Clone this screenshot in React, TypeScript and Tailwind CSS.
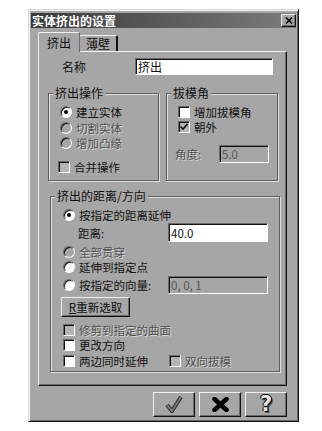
import type { ReactNode } from "react";

const FONT = "font-['SimSun','Noto_Sans_CJK_SC',sans-serif]";

type ItemProps = {
  children: ReactNode;
  checked?: boolean;
  disabled?: boolean;
  grayBox?: boolean;
};

// sunken round button, win95 style
const Radio = ({ checked, disabled }: { checked?: boolean; disabled?: boolean }) => (
  <span
    className={`flex h-[12px] w-[12px] shrink-0 items-center justify-center rounded-full border border-t-[#6a6a6a] border-l-[#6a6a6a] border-r-white border-b-white shadow-[inset_1px_1px_0_#111] ${
      disabled ? "bg-[#a6a6a6]" : "bg-white"
    }`}
  >
    {checked && <span className="h-[4px] w-[4px] rounded-full bg-black" />}
  </span>
);

const Box = ({ checked, disabled }: { checked?: boolean; disabled?: boolean }) => (
  <span
    className={`flex h-[12px] w-[12px] shrink-0 items-center justify-center border border-t-[#6a6a6a] border-l-[#6a6a6a] border-r-white border-b-white shadow-[inset_1px_1px_0_#111] ${
      disabled ? "bg-[#b4b4b4]" : "bg-white"
    }`}
  >
    {checked && (
      <svg width="8" height="8" viewBox="0 0 8 8">
        <path d="M0.5 3.5 L3 6 L7.5 1" stroke="#111" strokeWidth="1.6" fill="none" />
      </svg>
    )}
  </span>
);

const Text = ({ children, disabled }: { children: ReactNode; disabled?: boolean }) => (
  <span
    className={
      disabled
        ? "whitespace-nowrap text-[#505050] [text-shadow:1px_1px_0_#d6d6d6]"
        : "whitespace-nowrap text-[#111]"
    }
  >
    {children}
  </span>
);

const RadioItem = ({ children, checked, disabled }: ItemProps) => (
  <div className="flex items-center gap-[4px]">
    <Radio checked={checked} disabled={disabled} />
    <Text disabled={disabled}>{children}</Text>
  </div>
);

const CheckItem = ({ children, checked, disabled, grayBox }: ItemProps) => (
  <div className="flex items-center gap-[4px]">
    <Box checked={checked} disabled={disabled || grayBox} />
    <Text disabled={disabled}>{children}</Text>
  </div>
);

const Field = ({ value, disabled, className }: { value: string; disabled?: boolean; className: string }) => (
  <div
    className={`flex items-center border border-t-[#6a6a6a] border-l-[#6a6a6a] border-r-white border-b-white pl-[2px] shadow-[inset_1px_1px_0_#111] ${
      disabled ? "bg-[#a6a6a6] text-[#555]" : "bg-white text-[#111]"
    } ${className}`}
  >
    {value}
  </div>
);

const Group = ({ title, className, children }: { title: string; className: string; children: ReactNode }) => (
  <div
    className={`relative border border-[#5e5e5e] shadow-[1px_1px_0_#e0e0e0,inset_1px_1px_0_#e0e0e0] ${className}`}
  >
    <span className="absolute -top-[8px] left-[4px] bg-[#a6a6a6] px-[2px] leading-[14px] text-[12px] text-[#111]">
      {title}
    </span>
    {children}
  </div>
);

const RaisedButton = ({ children, className }: { children: ReactNode; className: string }) => (
  <div
    className={`flex items-center justify-center border border-t-[#f0f0f0] border-l-[#f0f0f0] border-r-[#111] border-b-[#111] bg-[#a6a6a6] shadow-[inset_-1px_-1px_0_#6a6a6a] ${className}`}
  >
    {children}
  </div>
);

export default function App() {
  return (
    <div className={`h-[431px] w-[322px] bg-white pl-[28px] pt-[9px] text-[11.5px] leading-[14px] ${FONT}`}>
      {/* DIALOG */}
      <div className="h-[413px] w-[271px] border border-t-[#d8d8d8] border-l-[#d8d8d8] border-r-[#111] border-b-[#111] bg-[#a6a6a6] px-[2px] pt-[3px] shadow-[inset_1px_1px_0_#f4f4f4,inset_-1px_-1px_0_#6a6a6a]">
        {/* TITLE BAR */}
        <div className="flex h-[15px] items-center justify-between bg-gradient-to-r from-[#3a3a3a] to-[#7c7c7c] pl-[1px]">
          <span className="text-[12px] font-bold leading-[15px] text-white">实体挤出的设置</span>
          <RaisedButton className="h-[13px] w-[15px]">
            <svg width="8" height="7" viewBox="0 0 8 7">
              <path d="M1 0.5 L7 6.5 M7 0.5 L1 6.5" stroke="#000" strokeWidth="1.6" />
            </svg>
          </RaisedButton>
        </div>

        {/* TABS */}
        <div className="ml-[7px] mt-[4px] flex h-[19px] items-end">
          <div className="relative z-10 -mb-[1px] flex h-[20px] w-[42px] items-center justify-center rounded-tl-[2px] border-l border-t border-r border-l-[#f0f0f0] border-t-[#f0f0f0] border-r-[#6a6a6a] bg-[#a6a6a6] text-[12px] text-[#111]">
            挤出
          </div>
          <div className="flex h-[16px] w-[38px] items-center justify-center rounded-tr-[2px] border-t border-r-2 border-t-[#f0f0f0] border-r-[#111] text-[12px] text-[#111]">
            薄壁
          </div>
        </div>

        {/* PANEL */}
        <div className="ml-[7px] h-[335px] w-[249px] border border-t-[#f0f0f0] border-l-[#f0f0f0] border-r-[#111] border-b-[#111] shadow-[inset_-1px_-1px_0_#6a6a6a]">
          {/* NAME */}
          <div className="mt-[6px] flex h-[17px] items-center">
            <div className="w-[96px] pl-[23px] text-[12px] text-[#111]">名称</div>
            <Field value="挤出" className="h-[17px] w-[138px] text-[12px]" />
          </div>

          <div className="mt-[18px] flex">
            {/* 挤出操作 */}
            <Group title="挤出操作" className="ml-[9px] h-[88px] w-[111px]">
              <div className="pl-[11px] pt-[10px]">
                <div className="flex h-[16px] items-center">
                  <RadioItem checked>建立实体</RadioItem>
                </div>
                <div className="flex h-[16px] items-center">
                  <RadioItem disabled>切割实体</RadioItem>
                </div>
                <div className="flex h-[14px] items-center">
                  <RadioItem disabled>增加凸缘</RadioItem>
                </div>
              </div>
              <div className="mt-[10px] flex h-[14px] items-center pl-[9px]">
                <CheckItem grayBox>合并操作</CheckItem>
              </div>
            </Group>

            {/* 拔模角 */}
            <Group title="拔模角" className="ml-[7px] h-[88px] w-[112px]">
              <div className="pl-[11px] pt-[10px]">
                <div className="flex h-[16px] items-center">
                  <CheckItem>增加拔模角</CheckItem>
                </div>
                <div className="flex h-[14px] items-center">
                  <CheckItem checked grayBox>
                    朝外
                  </CheckItem>
                </div>
              </div>
              <div className="mt-[11px] flex h-[18px] items-center pl-[8px]">
                <div className="w-[44px]">
                  <Text disabled>角度:</Text>
                </div>
                <Field value="5.0" disabled className="h-[18px] w-[50px]" />
              </div>
            </Group>
          </div>

          {/* 挤出的距离/方向 */}
          <Group title="挤出的距离/方向" className="ml-[11px] mt-[15px] h-[176px] w-[230px]">
            <div className="pl-[12px] pt-[10px]">
              <div className="flex h-[16px] items-center">
                <RadioItem checked>按指定的距离延伸</RadioItem>
              </div>
              <div className="flex h-[19px] items-center">
                <div className="w-[105px] pl-[15px]">
                  <Text>距离:</Text>
                </div>
                <Field value="40.0" className="h-[19px] w-[100px]" />
              </div>
              <div className="mt-[3px] flex h-[14px] items-center">
                <RadioItem disabled>全部贯穿</RadioItem>
              </div>
              <div className="mt-[1px] flex h-[14px] items-center">
                <RadioItem>延伸到指定点</RadioItem>
              </div>
              <div className="mt-[2px] flex h-[18px] items-center">
                <div className="w-[105px]">
                  <RadioItem>按指定的向量:</RadioItem>
                </div>
                <Field value="0, 0, 1" disabled className="h-[18px] w-[100px]" />
              </div>
              <RaisedButton className="-ml-[2px] mt-[3px] h-[20px] w-[69px] text-[#111]">
                <span>
                  <span className="underline">R</span>重新选取
                </span>
              </RaisedButton>
              <div className="mt-[6px] flex h-[14px] items-center">
                <CheckItem disabled>修剪到指定的曲面</CheckItem>
              </div>
              <div className="mt-[1px] flex h-[14px] items-center">
                <CheckItem>更改方向</CheckItem>
              </div>
              <div className="mt-[2px] flex h-[14px] items-center">
                <div className="w-[106px]">
                  <CheckItem>两边同时延伸</CheckItem>
                </div>
                <CheckItem disabled>双向拔模</CheckItem>
              </div>
            </div>
          </Group>
        </div>

        {/* BUTTONS */}
        <div className="ml-[7px] mt-[6px] flex w-[249px] justify-end gap-[4px]">
          <RaisedButton className="h-[25px] w-[42px]">
            <svg width="18" height="17" viewBox="0 0 18 17">
              <path d="M2 9 L7 15 L16 1" stroke="#2a2a2a" strokeWidth="4" fill="none" strokeLinejoin="round" />
              <path d="M2 9 L7 15 L16 1" stroke="#7a7a7a" strokeWidth="2" fill="none" strokeLinejoin="round" />
            </svg>
          </RaisedButton>
          <RaisedButton className="h-[25px] w-[42px]">
            <svg width="17" height="15" viewBox="0 0 17 15">
              <path d="M2.5 2 L14.5 13 M14.5 2 L2.5 13" stroke="#000" strokeWidth="4.5" strokeLinecap="round" />
            </svg>
          </RaisedButton>
          <RaisedButton className="h-[25px] w-[42px]">
            <span className="font-['DejaVu_Sans',sans-serif] text-[21px] font-black leading-[21px] text-[#e6e6e6] [text-shadow:1px_1px_0_#000,-1px_0_0_#000,0_-1px_0_#000,1px_0_0_#000,2px_2px_0_#555]">
              ?
            </span>
          </RaisedButton>
        </div>
      </div>
    </div>
  );
}
